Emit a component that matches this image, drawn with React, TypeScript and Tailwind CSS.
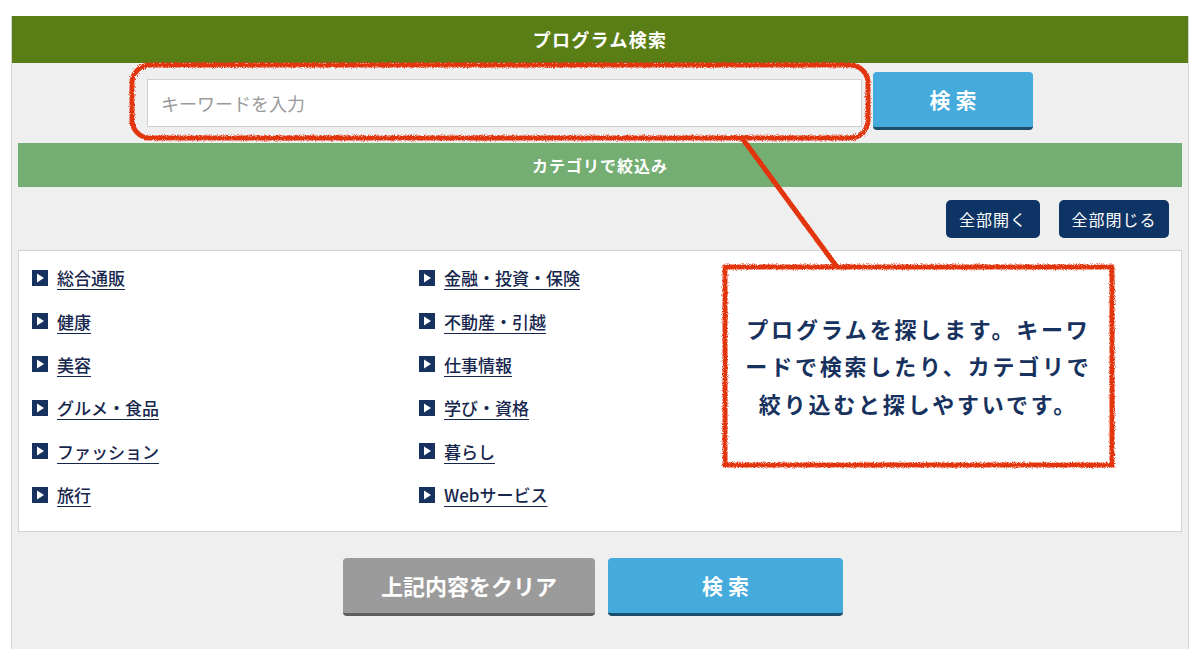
import React from 'react';

const leftItems = ['総合通販', '健康', '美容', 'グルメ・食品', 'ファッション', '旅行'];
const rightItems = ['金融・投資・保険', '不動産・引越', '仕事情報', '学び・資格', '暮らし', 'Webサービス'];

function PlayIcon() {
  return (
    <svg width="16" height="16" viewBox="0 0 16 16" className="shrink-0">
      <rect width="16" height="16" fill="#17325e" />
      <path d="M5 3.5 L12 8 L5 12.5 Z" fill="#ffffff" />
    </svg>
  );
}

function CategoryItem({ label }: { label: string }) {
  return (
    <li className="flex h-[43.4px] items-center gap-[9px]">
      <PlayIcon />
      <a
        href="#"
        className="text-[17px] font-medium leading-none text-[#16264d] underline decoration-1 underline-offset-[4px]"
      >
        {label}
      </a>
    </li>
  );
}

function Annotation() {
  return (
    <>
      <svg
        className="pointer-events-none absolute left-0 top-0"
        width="1200"
        height="649"
        viewBox="0 0 1200 649"
      >
        <defs>
          <filter id="rough" x="-5%" y="-5%" width="110%" height="110%">
            <feTurbulence type="fractalNoise" baseFrequency="1.1" numOctaves="2" result="noise" />
            <feDisplacementMap in="SourceGraphic" in2="noise" scale="4" />
          </filter>
        </defs>
        <g filter="url(#rough)" stroke="#e2360f" strokeWidth="5" strokeLinecap="round">
          <rect x="132" y="65" width="736" height="73" rx="18" fill="none" />
          <path d="M742 138 L837 267" fill="none" />
          <rect x="725" y="267" width="387" height="198" fill="#ffffff" />
        </g>
      </svg>
      <div className="pointer-events-none absolute left-[725px] top-[267px] flex h-[198px] w-[387px] items-center justify-center">
        <p className="text-center text-[22px] font-bold leading-[37.5px] tracking-[2.8px] text-[#17325e]">
          プログラムを探します。キーワ
          <br />
          ードで検索したり、カテゴリで
          <br />
          絞り込むと探しやすいです。
        </p>
      </div>
    </>
  );
}

export default function App() {
  return (
    <div className="relative h-[649px] w-[1200px] overflow-hidden bg-white pt-[16px] font-['Hiragino_Sans','Noto_Sans_CJK_JP',sans-serif]">
      <div className="ml-[11px] w-[1178px] border-x border-[#d6d6d6] bg-[#efefef] pb-[40px]">
        <div className="flex h-[47px] items-center justify-center bg-[#5a7e16]">
          <h2 className="text-[18px] font-bold tracking-[1.3px] text-white">プログラム検索</h2>
        </div>

        <div className="flex h-[80px] items-center gap-[11px] pl-[135px]">
          <input
            type="text"
            placeholder="キーワードを入力"
            className="h-[48px] w-[715px] border border-[#cfcfcf] bg-white px-[13px] text-[18px] placeholder:text-[#9a9a9a] focus:outline-none"
          />
          <button className="-mt-[4px] h-[58px] w-[160px] rounded-[4px] border-b-[3px] border-[#1d4e6b] bg-[#44abdc] text-[21px] font-bold text-white">
            検 索
          </button>
        </div>

        <div className="mx-[6px] flex h-[44px] items-center justify-center bg-[#75ae73]">
          <h3 className="text-[16px] font-bold tracking-[1px] text-white">カテゴリで絞込み</h3>
        </div>

        <div className="flex justify-end gap-[19px] pr-[19px] pt-[13px]">
          <button className="h-[38px] w-[94px] rounded-[5px] bg-[#0e3465] text-[16px] tracking-[1px] text-white">
            全部開く
          </button>
          <button className="h-[38px] w-[110px] rounded-[5px] bg-[#0e3465] text-[16px] tracking-[1px] text-white">
            全部閉じる
          </button>
        </div>

        <div className="mx-[6px] mt-[12px] border border-[#d2d2d2] bg-white pb-[15px] pl-[13px] pt-[5px]">
          <div className="grid grid-cols-[387px_387px]">
            <ul>
              {leftItems.map((item) => (
                <CategoryItem key={item} label={item} />
              ))}
            </ul>
            <ul>
              {rightItems.map((item) => (
                <CategoryItem key={item} label={item} />
              ))}
            </ul>
          </div>
        </div>

        <div className="flex justify-center gap-[13px] pr-[14px] pt-[26px]">
          <button className="h-[58px] w-[252px] rounded-[4px] border-b-[3px] border-[#5e5e5e] bg-[#9b9b9b] text-[22px] font-bold text-white">
            上記内容をクリア
          </button>
          <button className="h-[58px] w-[235px] rounded-[4px] border-b-[3px] border-[#1d4e6b] bg-[#44abdc] text-[21px] font-bold text-white">
            検 索
          </button>
        </div>
      </div>

      <Annotation />
    </div>
  );
}
